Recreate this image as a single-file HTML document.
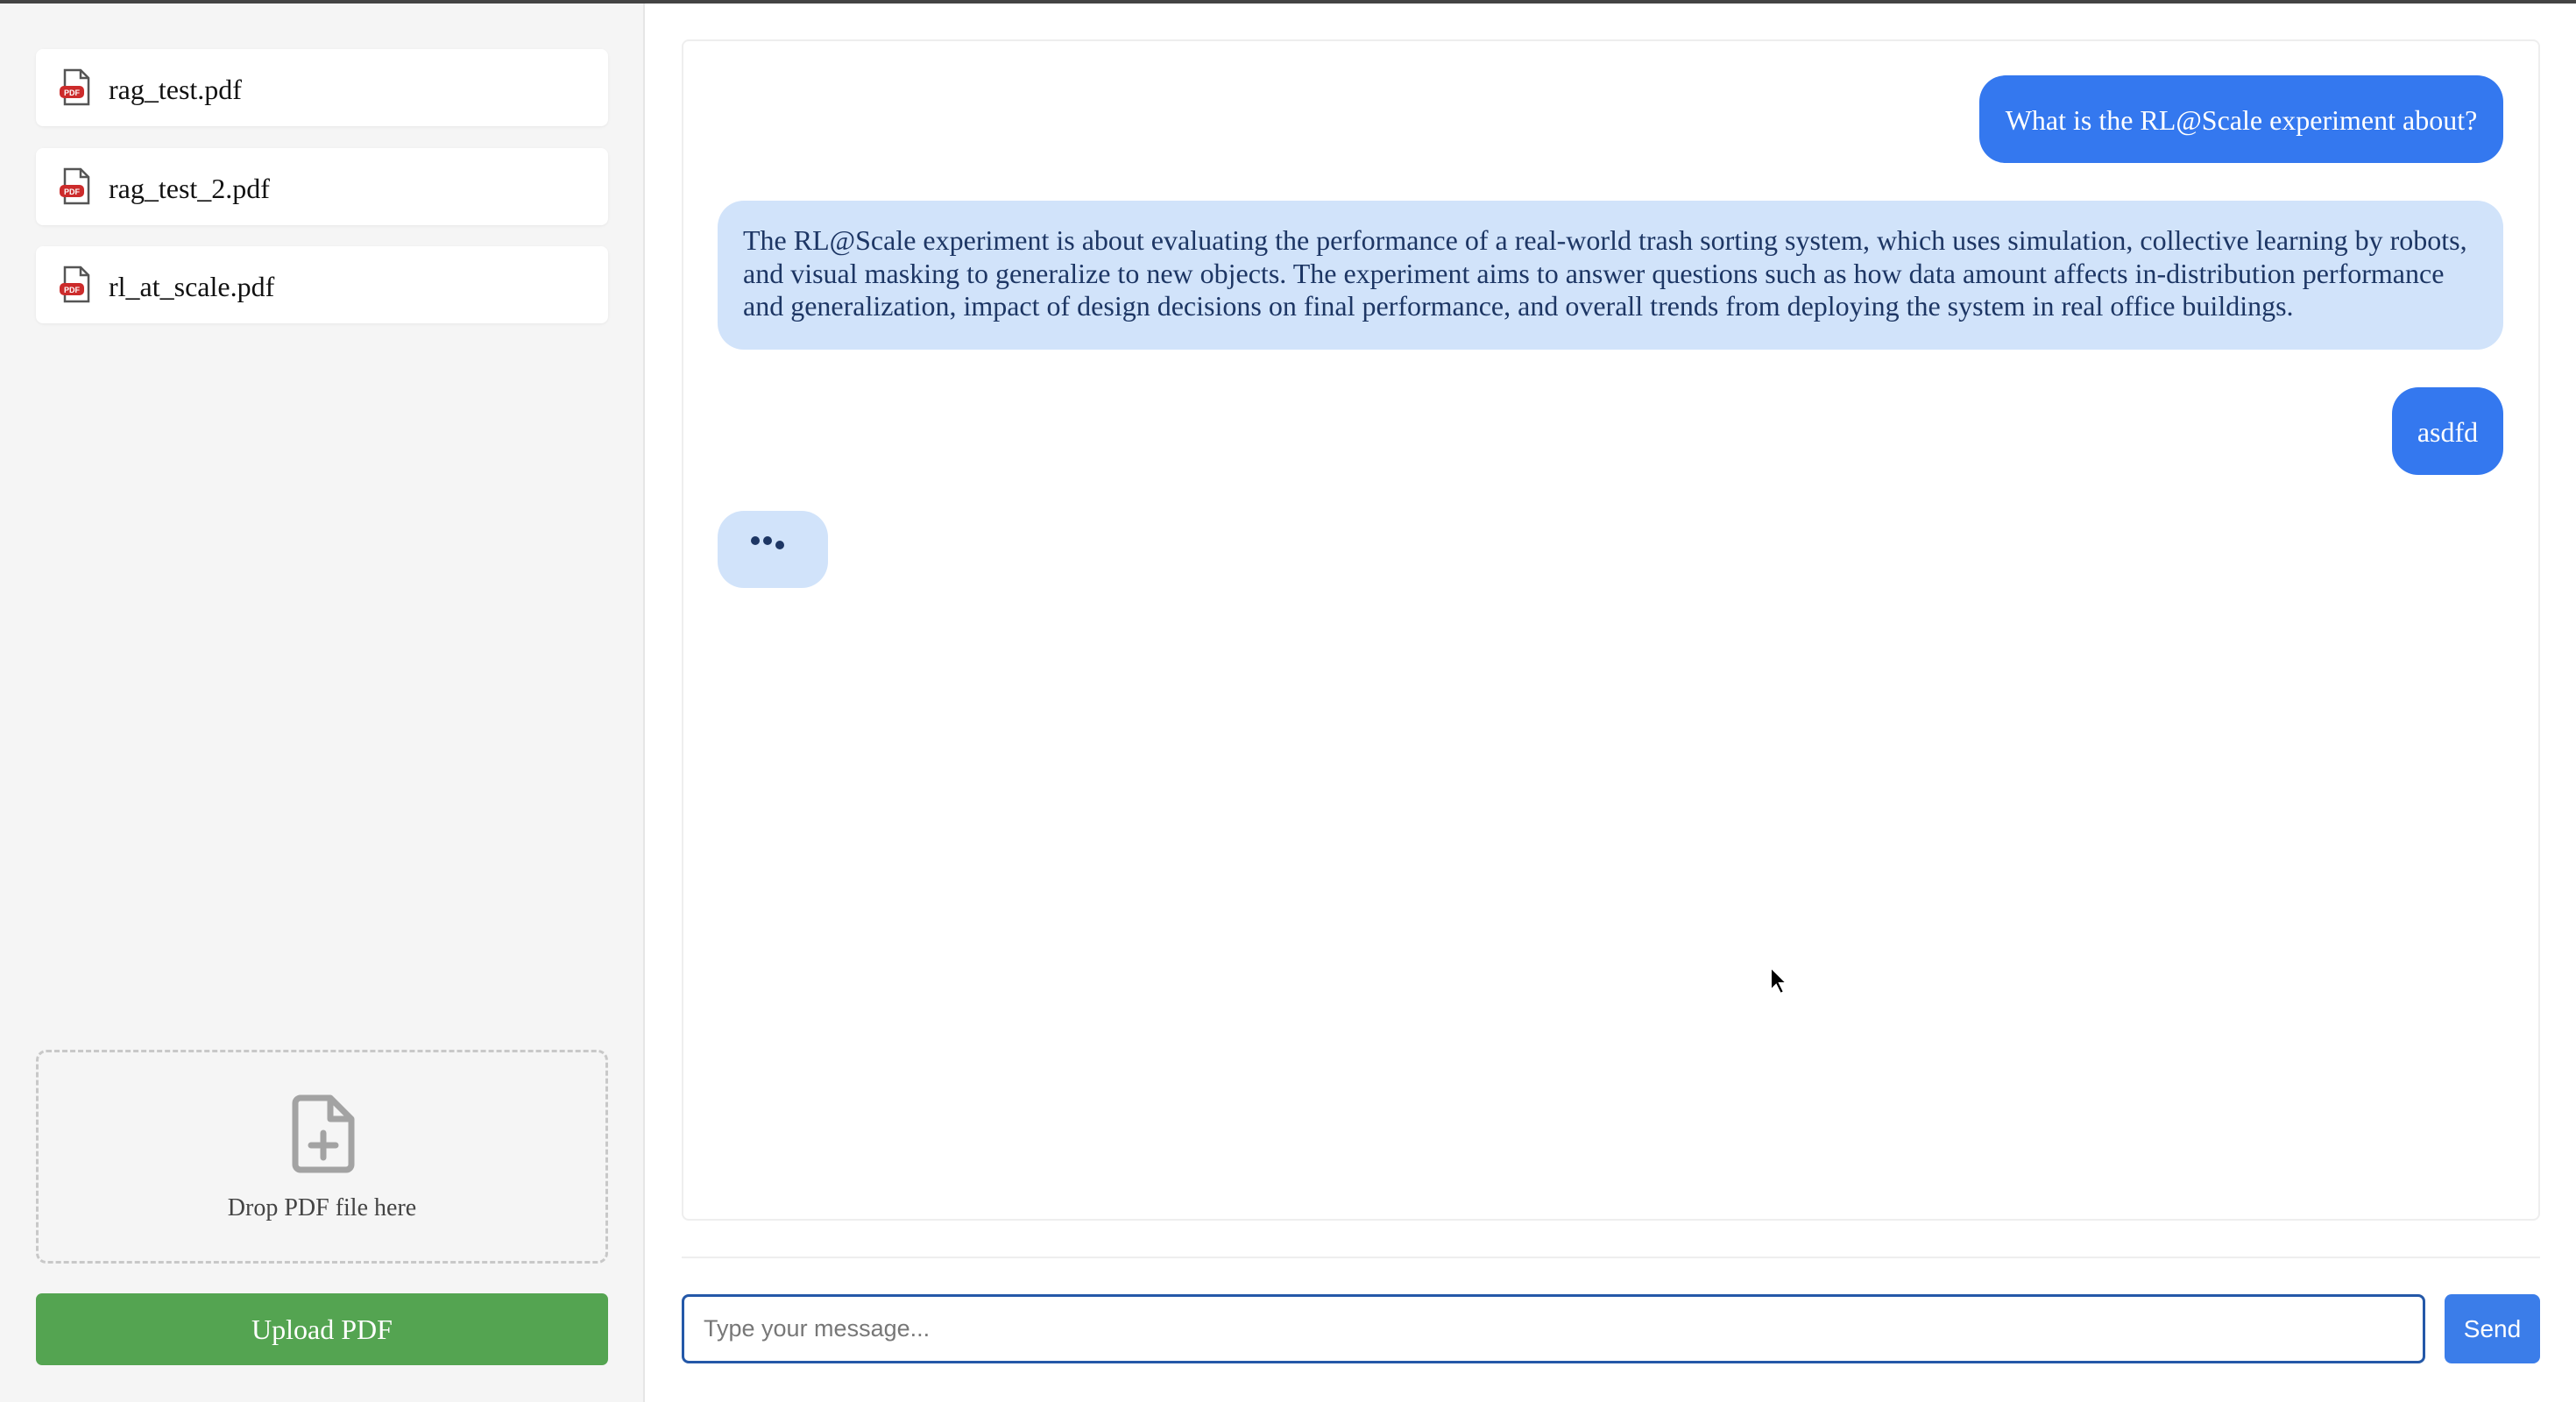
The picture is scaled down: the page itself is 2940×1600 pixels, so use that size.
<!DOCTYPE html>
<html><head><meta charset="utf-8"><style>
*{box-sizing:border-box;margin:0;padding:0}
html,body{width:2940px;height:1600px;overflow:hidden;background:#fff;font-family:"Liberation Serif",serif}
.top{position:absolute;left:0;top:0;width:2940px;height:4px;background:#444}
.side{position:absolute;left:0;top:4px;width:736px;height:1596px;background:#f5f5f5;border-right:2px solid #e6e6e6}
.item{position:absolute;left:41px;width:653px;height:88px;background:#fff;border-radius:8px;box-shadow:0 1px 3px rgba(0,0,0,.06)}
.item svg{position:absolute;left:26px;top:22px}
.item span{position:absolute;left:83px;top:2px;line-height:88px;font-size:32px;color:#111}
.drop{position:absolute;left:41px;top:1198px;width:653px;height:244px;border:3px dashed #c8c8c8;border-radius:12px}
.drop span{position:absolute;left:0;right:0;top:162px;text-align:center;font-size:28px;color:#444}
.up{position:absolute;left:41px;top:1476px;width:653px;height:82px;background:#54a451;border-radius:7px;color:#fff;font-size:32px;text-align:center;line-height:82px}
.chat{position:absolute;left:778px;top:45px;width:2121px;height:1348px;border:2px solid #eee;border-radius:8px;background:#fff}
.sep{position:absolute;left:778px;top:1434px;width:2121px;height:2px;background:#eee}
.b{position:absolute;border-radius:30px;font-size:32px}
.u{background:#3478ef;color:#fff;text-align:center}
.a{background:#d1e3fa;color:#1d3664}
.inp{position:absolute;left:778px;top:1477px;width:1990px;height:79px;border:3px solid #2458a8;border-radius:8px;font-family:"Liberation Sans",sans-serif;font-size:27px;color:#777;padding-left:22px;line-height:73px}
.send{position:absolute;left:2790px;top:1477px;width:109px;height:79px;background:#3b7de9;border-radius:8px;color:#fff;font-family:"Liberation Sans",sans-serif;font-size:28px;text-align:center;line-height:79px}
</style></head><body>
<div class="top"></div>
<div class="side">
<div class="item" style="top:52px"><svg width="38" height="44" viewBox="0 0 38 44"><path d="M7 2h18l9 9v30H7z" fill="#fff" stroke="#555" stroke-width="2.5"/><path d="M25 2v9h9" fill="none" stroke="#555" stroke-width="2.5"/><rect x="1" y="20" width="28" height="14" rx="5" fill="#cc2b2b"/><text x="15" y="31" font-size="9" fill="#fff" text-anchor="middle" font-family="Liberation Sans" font-weight="bold">PDF</text></svg><span>rag_test.pdf</span></div>
<div class="item" style="top:165px"><svg width="38" height="44" viewBox="0 0 38 44"><path d="M7 2h18l9 9v30H7z" fill="#fff" stroke="#555" stroke-width="2.5"/><path d="M25 2v9h9" fill="none" stroke="#555" stroke-width="2.5"/><rect x="1" y="20" width="28" height="14" rx="5" fill="#cc2b2b"/><text x="15" y="31" font-size="9" fill="#fff" text-anchor="middle" font-family="Liberation Sans" font-weight="bold">PDF</text></svg><span>rag_test_2.pdf</span></div>
<div class="item" style="top:277px"><svg width="38" height="44" viewBox="0 0 38 44"><path d="M7 2h18l9 9v30H7z" fill="#fff" stroke="#555" stroke-width="2.5"/><path d="M25 2v9h9" fill="none" stroke="#555" stroke-width="2.5"/><rect x="1" y="20" width="28" height="14" rx="5" fill="#cc2b2b"/><text x="15" y="31" font-size="9" fill="#fff" text-anchor="middle" font-family="Liberation Sans" font-weight="bold">PDF</text></svg><span>rl_at_scale.pdf</span></div>
</div>
<div class="drop"><svg style="position:absolute;left:287px;top:48px" width="76" height="90" viewBox="0 0 76 90"><path d="M12 4h34l24 24v52a6 6 0 0 1-6 6H12a6 6 0 0 1-6-6V10a6 6 0 0 1 6-6z" fill="none" stroke="#a3a3a3" stroke-width="7" stroke-linejoin="round"/><path d="M46 4v24h24" fill="none" stroke="#a3a3a3" stroke-width="7" stroke-linejoin="round"/><path d="M38 44v28M24 58h28" stroke="#a3a3a3" stroke-width="7" stroke-linecap="round"/></svg><span>Drop PDF file here</span></div>
<div class="up">Upload PDF</div>
<div class="chat"></div>
<div class="b u" style="left:2259px;top:86px;width:598px;height:100px;line-height:102px">What is the RL@Scale experiment about?</div>
<div class="b a" style="left:819px;top:229px;width:2038px;height:170px;padding:27px 0 0 29px;line-height:37.5px;white-space:nowrap">The RL@Scale experiment is about evaluating the performance of a real-world trash sorting system, which uses simulation, collective learning by robots,<br>and visual masking to generalize to new objects. The experiment aims to answer questions such as how data amount affects in-distribution performance<br>and generalization, impact of design decisions on final performance, and overall trends from deploying the system in real office buildings.</div>
<div class="b u" style="left:2730px;top:442px;width:127px;height:100px;line-height:102px">asdfd</div>
<div class="b a" style="left:819px;top:583px;width:126px;height:88px"><svg style="position:absolute;left:37px;top:26px" width="50" height="26"><circle cx="6" cy="8" r="5" fill="#1d3664"/><circle cx="20" cy="8" r="5" fill="#1d3664"/><circle cx="34" cy="13" r="5" fill="#1d3664"/></svg></div>
<div class="sep"></div>
<div class="inp">Type your message...</div>
<div class="send">Send</div>
<svg style="position:absolute;left:2019px;top:1102px" width="22" height="34" viewBox="0 0 22 34"><path d="M2 2v26l6-6 5 10 4-2-5-10h8z" fill="#000" stroke="#fff" stroke-width="2"/></svg>
</body></html>
